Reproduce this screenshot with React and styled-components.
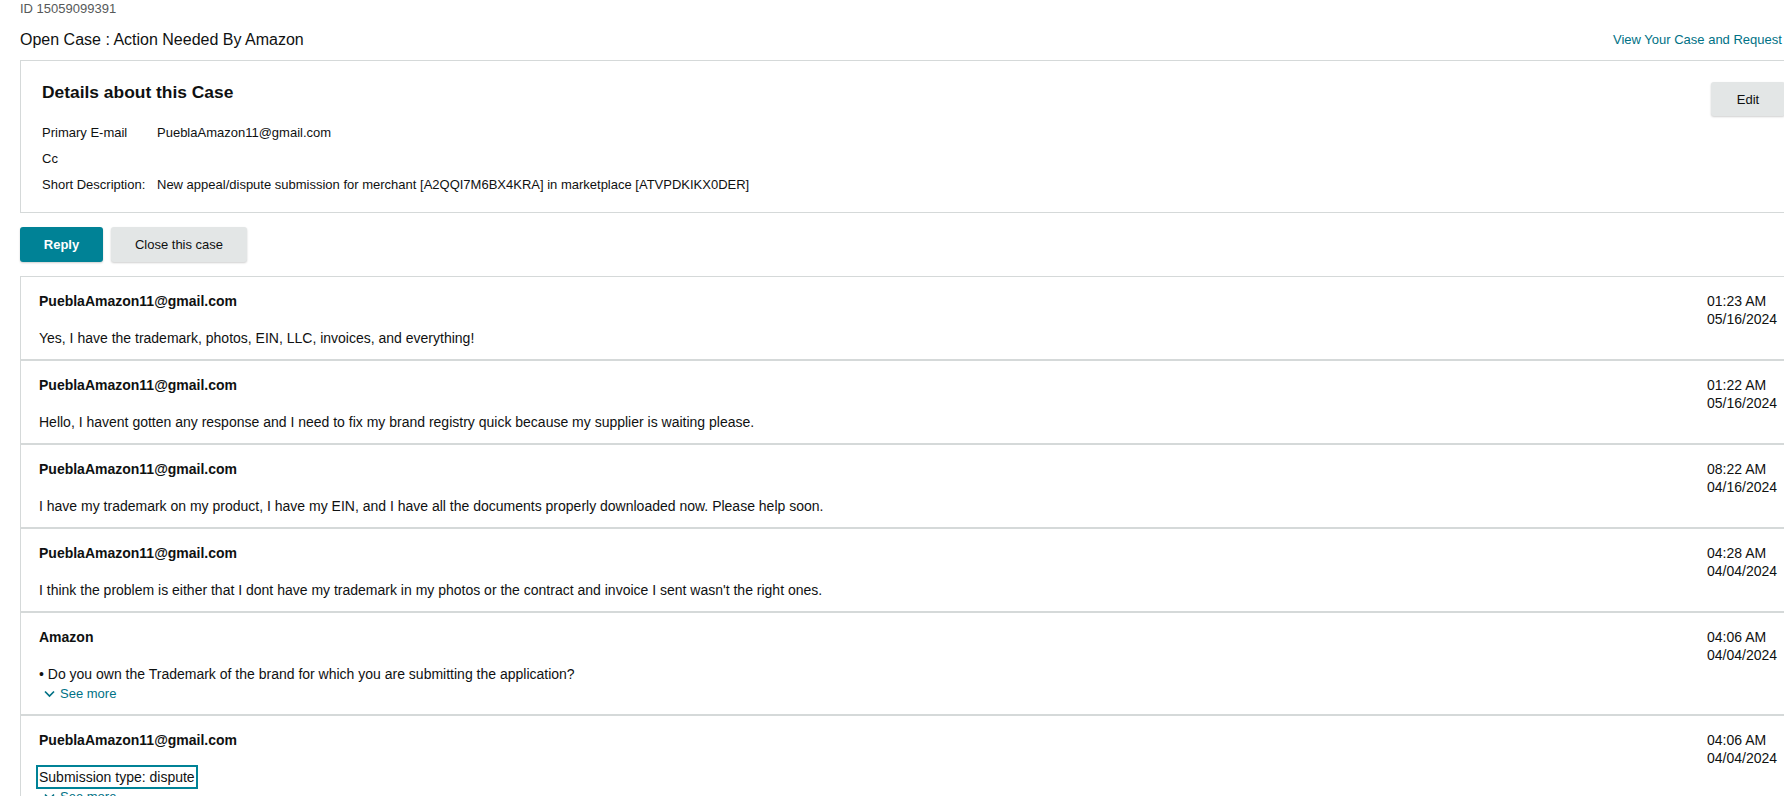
import React from "react";
import styled, { createGlobalStyle } from "styled-components";

const GlobalStyle = createGlobalStyle`
  html, body {
    margin: 0;
    padding: 0;
    background: #ffffff;
    overflow: hidden;
  }
  body {
    font-family: "Liberation Sans", Arial, sans-serif;
    color: #0f1111;
  }
`;

const Page = styled.div`
  width: 1786px;
  margin-left: 20px;
  padding-top: 1px;
`;

const CaseId = styled.div`
  font-size: 13px;
  line-height: 16px;
  color: #565959;
`;

const HeaderRow = styled.div`
  display: grid;
  grid-template-columns: 1fr 193px;
  align-items: center;
  margin-top: 11px;
  height: 24px;
  margin-bottom: 8px;
`;

const Title = styled.div`
  font-size: 16px;
  line-height: 24px;
`;

const HeaderLink = styled.a`
  font-size: 13px;
  line-height: 24px;
  color: #007185;
  white-space: nowrap;
  text-decoration: none;
`;

const DetailsCard = styled.section`
  border: 1px solid #d5d9d9;
  padding: 19px 20px 14px 21px;
  display: flex;
  justify-content: space-between;
  align-items: flex-start;
`;

const DetailsBody = styled.div`
  display: flex;
  flex-direction: column;
`;

const DetailsTitle = styled.h2`
  margin: 0 0 16px;
  font-size: 17.4px;
  line-height: 24px;
  font-weight: 700;
`;

const FieldRow = styled.div`
  display: flex;
  font-size: 13px;
  line-height: 26px;
`;

const FieldLabel = styled.span`
  width: ${(p) => p.$w || 115}px;
  flex: none;
`;

const Button = styled.button`
  font-family: inherit;
  font-size: 13px;
  height: 35px;
  border: none;
  border-radius: 3px;
  padding: 0;
  width: ${(p) => p.$w}px;
  cursor: pointer;
  background: ${(p) => (p.$primary ? "#008296" : "#e3e6e6")};
  color: ${(p) => (p.$primary ? "#ffffff" : "#0f1111")};
  font-weight: ${(p) => (p.$primary ? 700 : 400)};
  box-shadow: 0 1px 2px rgba(15, 17, 17, 0.2);
`;

const EditButton = styled(Button)`
  margin-top: 2px;
  height: 34px;
`;

const ButtonBar = styled.div`
  display: flex;
  gap: 8px;
  margin-top: 14px;
  margin-bottom: 14px;
`;

const MessageList = styled.div`
  border-top: 1px solid #d5d9d9;
  border-left: 1px solid #d5d9d9;
`;

const MessageRow = styled.div`
  display: grid;
  grid-template-columns: 1fr 80px;
  padding: 14px 19px 11px 18px;
  border-bottom: 2px solid #d5d9d9;
`;

const MessageMain = styled.div`
  display: flex;
  flex-direction: column;
`;

const Sender = styled.div`
  font-size: 14px;
  font-weight: 700;
  line-height: 20px;
  margin-bottom: 17px;
`;

const MessageText = styled.div`
  font-size: 14px;
  line-height: 20px;
`;

const Highlighted = styled.span`
  outline: 2px solid #008296;
  outline-offset: 0px;
  padding: 0 1px;
  margin-left: -1px;
  align-self: flex-start;
`;

const SeeMore = styled.a`
  display: flex;
  align-items: center;
  gap: 5px;
  font-size: 13px;
  line-height: 19px;
  color: #007185;
  padding-left: 5px;
  text-decoration: none;
`;

const TimeStamp = styled.div`
  font-size: 14px;
  line-height: 18px;
  white-space: nowrap;
  padding-top: 1px;
`;

const Chevron = () => (
  <svg width="11" height="8" viewBox="0 0 11 8" fill="none">
    <path d="M1 1.5 L5.5 6 L10 1.5" stroke="#007185" strokeWidth="1.7" />
  </svg>
);

const messages = [
  {
    sender: "PueblaAmazon11@gmail.com",
    text: "Yes, I have the trademark, photos, EIN, LLC, invoices, and everything!",
    time: "01:23 AM",
    date: "05/16/2024",
  },
  {
    sender: "PueblaAmazon11@gmail.com",
    text: "Hello, I havent gotten any response and I need to fix my brand registry quick because my supplier is waiting please.",
    time: "01:22 AM",
    date: "05/16/2024",
  },
  {
    sender: "PueblaAmazon11@gmail.com",
    text: "I have my trademark on my product, I have my EIN, and I have all the documents properly downloaded now. Please help soon.",
    time: "08:22 AM",
    date: "04/16/2024",
  },
  {
    sender: "PueblaAmazon11@gmail.com",
    text: "I think the problem is either that I dont have my trademark in my photos or the contract and invoice I sent wasn't the right ones.",
    time: "04:28 AM",
    date: "04/04/2024",
  },
  {
    sender: "Amazon",
    text: "• Do you own the Trademark of the brand for which you are submitting the application?",
    time: "04:06 AM",
    date: "04/04/2024",
    more: true,
  },
  {
    sender: "PueblaAmazon11@gmail.com",
    text: "Submission type: dispute",
    time: "04:06 AM",
    date: "04/04/2024",
    more: true,
    highlight: true,
  },
];

export default function App() {
  return (
    <>
      <GlobalStyle />
      <Page>
        <CaseId>ID 15059099391</CaseId>
        <HeaderRow>
          <Title>Open Case : Action Needed By Amazon</Title>
          <HeaderLink href="#">View Your Case and Request History</HeaderLink>
        </HeaderRow>

        <DetailsCard>
          <DetailsBody>
            <DetailsTitle>Details about this Case</DetailsTitle>
            <FieldRow>
              <FieldLabel $w={115}>Primary E-mail</FieldLabel>
              <span>PueblaAmazon11@gmail.com</span>
            </FieldRow>
            <FieldRow>
              <FieldLabel>Cc</FieldLabel>
            </FieldRow>
            <FieldRow>
              <FieldLabel>Short Description:</FieldLabel>
              <span>
                New appeal/dispute submission for merchant [A2QQI7M6BX4KRA] in
                marketplace [ATVPDKIKX0DER]
              </span>
            </FieldRow>
          </DetailsBody>
          <EditButton $w={74}>Edit</EditButton>
        </DetailsCard>

        <ButtonBar>
          <Button $primary $w={83}>Reply</Button>
          <Button $w={136}>Close this case</Button>
        </ButtonBar>

        <MessageList>
          {messages.map((m, i) => (
            <MessageRow key={i}>
              <MessageMain>
                <Sender>{m.sender}</Sender>
                {m.highlight ? (
                  <Highlighted as={MessageText}>{m.text}</Highlighted>
                ) : (
                  <MessageText>{m.text}</MessageText>
                )}
                {m.more && (
                  <SeeMore href="#">
                    <Chevron />
                    See more
                  </SeeMore>
                )}
              </MessageMain>
              <TimeStamp>
                {m.time}
                <br />
                {m.date}
              </TimeStamp>
            </MessageRow>
          ))}
        </MessageList>
      </Page>
    </>
  );
}
